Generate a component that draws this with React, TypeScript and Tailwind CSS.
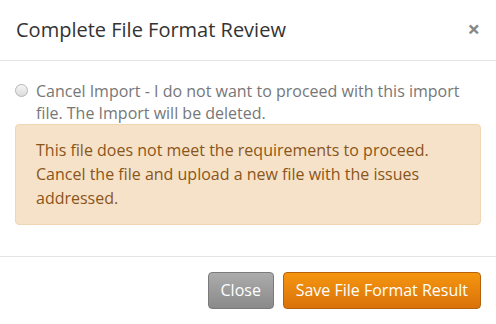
import React from "react";

const App = () => {
  return (
    <div className="w-[496px] h-[324px] bg-white flex flex-col font-['Open_Sans',sans-serif]">
      {/* Header */}
      <div className="h-[61px] flex items-center justify-between pl-[16px] pr-[16px] border-b border-[#e5e5e5]">
        <h4 className="text-[20px] text-[#333] leading-none">Complete File Format Review</h4>
        <button className="text-[#888] text-[22px] font-bold leading-none -mt-[4px]">×</button>
      </div>

      {/* Body */}
      <div className="flex-1 px-[15px] pt-[19px] border-b border-[#e5e5e5]">
        <label className="flex items-start gap-[8px]">
          <span className="mt-[4px] w-[13px] h-[13px] shrink-0 rounded-full border border-[#b5b5b5] bg-gradient-to-b from-[#f5f5f5] to-[#dcdcdc]" />
          <span className="text-[16px] leading-[22px] text-[#777]">
            Cancel Import - I do not want to proceed with this import file. The Import will be deleted.
          </span>
        </label>
        <div className="mt-0 h-[101px] rounded-[4px] bg-[#f6e2c9] border border-[#f0d6b4] pl-[20px] pr-[20px] pt-[13px] text-[16px] leading-[24px] text-[#8a5519]">
          This file does not meet the requirements to proceed. Cancel the file and upload a new file with the issues addressed.
        </div>
      </div>

      {/* Footer */}
      <div className="h-[67px] flex items-center justify-end gap-[9px] pr-[15px] pb-[1px]">
        <button className="h-[37px] w-[66px] rounded-[4px] border border-[#7a7a7a] bg-gradient-to-b from-[#acacac] to-[#8a8a8a] text-white text-[16px]">
          Close
        </button>
        <button className="h-[37px] px-[12px] rounded-[4px] border border-[#b5620a] bg-gradient-to-b from-[#f5960f] to-[#d9720a] text-white text-[16px]">
          Save File Format Result
        </button>
      </div>
    </div>
  );
};

export default App;
